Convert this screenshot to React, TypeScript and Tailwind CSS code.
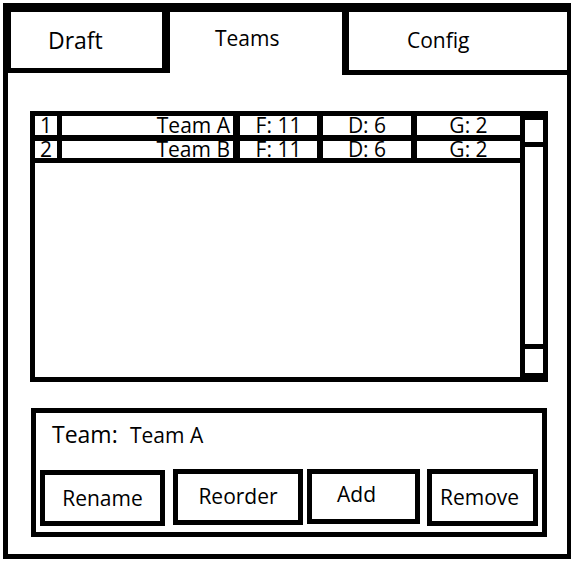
import React from 'react';

const rows = [
    { n: '1', name: 'Team A', f: 11, d: 6, g: 2 },
    { n: '2', name: 'Team B', f: 11, d: 6, g: 2 },
];

const buttons = [
    { label: 'Rename', cls: 'w-[125px] h-[56px] mt-[1px]' },
    { label: 'Reorder', cls: 'w-[130px] h-[56px] ml-[8px] pb-[2px]' },
    { label: 'Add', cls: 'w-[113px] h-[55px] ml-[4px] pr-[14px] pb-[5px]' },
    { label: 'Remove', cls: 'w-[111px] h-[57px] ml-[7px] pr-[6px]' },
];

export default function App() {
    return (
        <div className="w-[576px] h-[562px] bg-white pl-[3px] pt-[3px] text-black font-['Open_Sans',sans-serif]">
            <div className="w-[568px] h-[556px] flex flex-col border-black border-t-[9px] border-l-[5px] border-r-[4px] border-b-[5px]">
                {/* tabs */}
                <div className="flex h-[63px] items-start">
                    <div className="w-[162px] h-[61px] border-black border-l-[3px] border-r-[8px] border-b-[5px] pl-[37px] pt-[17px] text-[23px] leading-none">
                        Draft
                    </div>
                    <div className="w-[172px] h-[63px] pl-[45px] pt-[16px] text-[21px] leading-none">
                        Teams
                    </div>
                    <div className="flex-1 h-[63px] border-black border-l-[7px] border-b-[5px] pl-[58px] pt-[18px] text-[21px] leading-none">
                        Config
                    </div>
                </div>

                {/* team list */}
                <div className="ml-[22px] mt-[36px] w-[518px] h-[271px] flex border-[5px] border-black">
                    <div className="flex-1 flex flex-col text-[21px]">
                        {rows.map((r, i) => (
                            <div
                                key={r.n}
                                className={`flex border-black ${i === 0 ? 'h-[25px] border-b-[6px] leading-[19px]' : 'h-[22px] border-b-[5px] leading-[17px]'}`}
                            >
                                <div className="w-[27px] border-r-[5px] border-black text-center">{r.n}</div>
                                <div className="w-[178px] border-r-[7px] border-black text-right pr-[3px]">{r.name}</div>
                                <div className="w-[83px] border-r-[6px] border-black text-center">F: {r.f}</div>
                                <div className="w-[94px] border-r-[6px] border-black text-center">D: {r.d}</div>
                                <div className="flex-1 text-center">G: {r.g}</div>
                            </div>
                        ))}
                    </div>
                    {/* scrollbar */}
                    <div className="w-[23px] flex flex-col border-black border-l-[5px]">
                        <div className="h-[31px] border-black border-t-[4px] border-b-[5px]" />
                        <div className="flex-1" />
                        <div className="h-[33px] border-black border-t-[5px] border-b-[4px]" />
                    </div>
                </div>

                {/* selected team */}
                <div className="ml-[23px] mt-[26px] w-[516px] h-[129px] border-[5px] border-black flex flex-col">
                    <div className="flex items-baseline pl-[16px] mt-[10px] leading-none">
                        <span className="w-[78px] text-[23px]">Team:</span>
                        <span className="text-[21px]">Team A</span>
                    </div>
                    <div className="flex items-start ml-[4px] mt-[23px]">
                        {buttons.map((b) => (
                            <div
                                key={b.label}
                                className={`${b.cls} border-[5px] border-black flex items-center justify-center text-[21px] leading-none`}
                            >
                                {b.label}
                            </div>
                        ))}
                    </div>
                </div>
            </div>
        </div>
    );
}
